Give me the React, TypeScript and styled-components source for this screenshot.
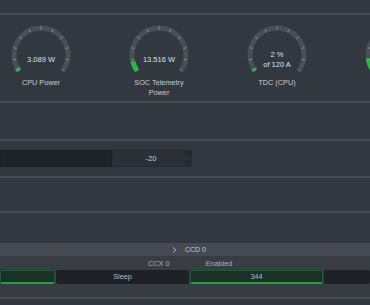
import React from "react";
import styled, { createGlobalStyle } from "styled-components";

const Global = createGlobalStyle`
  html, body { margin: 0; padding: 0; background: #323840; }
  body { font-family: "Liberation Sans", Arial, sans-serif; overflow: hidden; }
  #root { width: 370px; height: 305px; overflow: hidden; }
`;

const Page = styled.div`
  width: 370px;
  height: 305px;
  background: #323840;
  display: flex;
  flex-direction: column;
  overflow: hidden;
`;

const Spacer = styled.div<{ $h: number }>`
  height: ${(p) => p.$h}px;
  flex: none;
`;

const Separator = styled.div`
  height: 2px;
  background: #484d55;
  flex: none;
`;

const GaugeSection = styled.div`
  height: 86px;
  flex: none;
  display: flex;
  margin-left: -18px;
  padding-top: 10px;
  box-sizing: border-box;
`;

const GaugeCell = styled.div`
  width: 118px;
  flex: none;
  display: flex;
  flex-direction: column;
  align-items: center;
`;

const Dial = styled.div`
  position: relative;
  width: 60px;
  height: 48px;
`;

const DialValue = styled.div`
  position: absolute;
  left: -10px;
  right: -10px;
  top: 35px;
  text-align: center;
  font-size: 7.5px;
  line-height: 10px;
  color: #dde1e6;
  transform: translateY(-50%);
`;

const GaugeLabel = styled.div`
  margin-top: 5px;
  width: 62px;
  text-align: center;
  font-size: 7.3px;
  line-height: 10px;
  color: #c6cbd1;
`;

const SliderSection = styled.div`
  height: 35px;
  flex: none;
  display: flex;
  align-items: center;
`;

const Track = styled.div`
  width: 112px;
  height: 17px;
  background: #202328;
  box-shadow: inset 0 0 0 1px #1c1f23;
`;

const NumberBox = styled.div`
  position: relative;
  width: 80px;
  height: 17px;
  background: #2b3037;
  border-radius: 0 3px 3px 0;
  box-shadow: inset 0 0 0 1px #262a30;
  display: flex;
  align-items: center;
  justify-content: center;
  padding-right: 2px;
  box-sizing: border-box;
  font-size: 7.5px;
  color: #c9cdd2;
`;

const Spin = styled.div<{ $top: number }>`
  position: absolute;
  right: 0;
  top: ${(p) => p.$top}px;
  width: 7px;
  height: 7px;
  border-radius: 2px;
  background: #262a30;
`;

const HeaderBand = styled.div`
  height: 13px;
  flex: none;
  background: #454a52;
  display: flex;
  align-items: center;
  justify-content: center;
  gap: 8px;
  padding-left: 8px;
  font-size: 7px;
  color: #c3c8ce;
`;

const Chevron = styled.svg`
  width: 5px;
  height: 6px;
`;

const SubHeader = styled.div`
  height: 14px;
  flex: none;
  background: #383d44;
  display: flex;
  align-items: center;
  padding-left: 148px;
  gap: 36px;
  font-size: 7.3px;
  color: #a9aeb5;
`;

const StateRow = styled.div`
  height: 14px;
  flex: none;
  display: flex;
  gap: 1px;
  background: #383d44;
`;

const StateCell = styled.div<{ $w?: number; $on?: boolean }>`
  ${(p) => (p.$w ? `width: ${p.$w}px; flex: none;` : "flex: 1;")}
  box-sizing: border-box;
  border-radius: 2px;
  background: ${(p) => (p.$on ? "#193129" : "#1f2124")};
  border: 1px solid ${(p) => (p.$on ? "#1b5a32" : "#1f2124")};
  border-bottom: 2px solid ${(p) => (p.$on ? "#25a03e" : "#1f2124")};
  display: flex;
  align-items: center;
  justify-content: center;
  font-size: 7.3px;
  color: ${(p) => (p.$on ? "#aebfb4" : "#b7bbc0")};
`;

const FooterBand = styled.div`
  height: 13px;
  flex: none;
  background: #373c43;
`;

type GaugeProps = { frac: number; value: React.ReactNode; label?: string };

const START = 215;
const SWEEP = 250;
const CX = 30;
const CY = 30;
const R = 27;

function pt(angleDeg: number, r: number) {
  const a = (angleDeg * Math.PI) / 180;
  return [CX + r * Math.cos(a), CY - r * Math.sin(a)];
}

function arcPath(from: number, to: number, r: number) {
  const [x1, y1] = pt(from, r);
  const [x2, y2] = pt(to, r);
  const large = Math.abs(from - to) > 180 ? 1 : 0;
  return `M ${x1} ${y1} A ${r} ${r} 0 ${large} 1 ${x2} ${y2}`;
}

function Gauge({ frac, value, label }: GaugeProps) {
  const end = START - SWEEP;
  const fillEnd = START - SWEEP * frac;
  const ticks = Array.from({ length: 11 }, (_, i) => START - i * 25);
  return (
    <GaugeCell>
      <Dial>
        <svg width="60" height="48" viewBox="0 0 60 48">
          <path d={arcPath(START, end, R)} stroke="#4a4f57" strokeWidth="5" fill="none" />
          {frac > 0 && (
            <path d={arcPath(START, fillEnd, R)} stroke="#2cb446" strokeWidth="5" fill="none" />
          )}
          {ticks.map((t) => {
            const [x1, y1] = pt(t, 25.3);
            const [x2, y2] = pt(t, 28.3);
            return <line key={t} x1={x1} y1={y1} x2={x2} y2={y2} stroke="#9ca1a8" strokeWidth="0.8" />;
          })}
        </svg>
        <DialValue>{value}</DialValue>
      </Dial>
      {label && <GaugeLabel>{label}</GaugeLabel>}
    </GaugeCell>
  );
}

export default function App() {
  return (
    <>
      <Global />
      <Page>
        <Spacer $h={13} />
        <Separator />
        <GaugeSection>
          <Gauge frac={0.025} value="3.089 W" label="CPU Power" />
          <Gauge frac={0.085} value="13.516 W" label="SOC Telemetry Power" />
          <Gauge
            frac={0.02}
            value={
              <>
                2 %<br />of 120 A
              </>
            }
            label="TDC (CPU)"
          />
          <Gauge frac={0.11} value="" />
        </GaugeSection>
        <Separator />
        <Spacer $h={36} />
        <Separator />
        <SliderSection>
          <Track />
          <NumberBox>
            -20
            <Spin $top={0} />
            <Spin $top={10} />
          </NumberBox>
        </SliderSection>
        <Separator />
        <Spacer $h={33} />
        <Separator />
        <Spacer $h={30} />
        <HeaderBand>
          <Chevron viewBox="0 0 5 6">
            <path d="M1 0.5 L3.8 3 L1 5.5" stroke="#c3c8ce" strokeWidth="0.9" fill="none" />
          </Chevron>
          <span>CCD 0</span>
        </HeaderBand>
        <SubHeader>
          <span>CCX 0</span>
          <span>Enabled</span>
        </SubHeader>
        <StateRow>
          <StateCell $w={55} $on />
          <StateCell $w={133}>Sleep</StateCell>
          <StateCell $w={133} $on>
            344
          </StateCell>
          <StateCell />
        </StateRow>
        <FooterBand />
        <Separator />
        <Spacer $h={6} />
      </Page>
    </>
  );
}
